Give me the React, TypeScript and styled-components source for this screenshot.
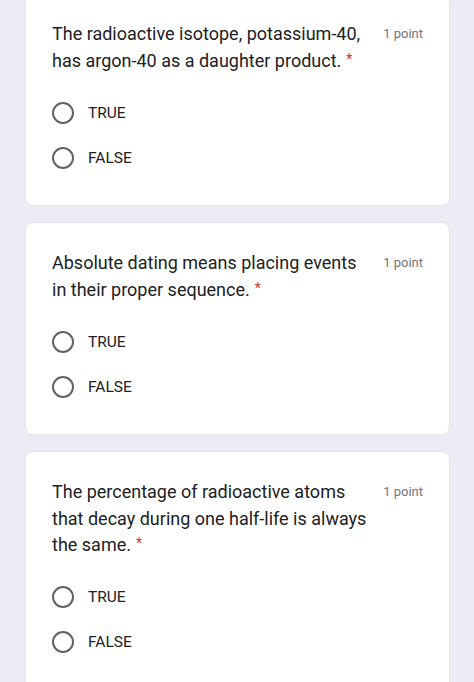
import React from 'react';
import styled, { createGlobalStyle } from 'styled-components';

const GlobalStyle = createGlobalStyle`
    html, body {
        margin: 0;
        padding: 0;
        background-color: #edebf6;
        font-family: Roboto, "Liberation Sans", Arial, sans-serif;
        overflow: hidden;
    }
`;

const Page = styled.div`
    display: flex;
    flex-direction: column;
    gap: 16px;
    margin-top: -7px;
    padding: 0 24px 0 25px;
`;

const Card = styled.div`
    background-color: #ffffff;
    border: 1px solid #e6e4ec;
    border-radius: 8px;
    padding: 27px 26px 25px 26px;
`;

const Header = styled.div`
    display: flex;
    justify-content: space-between;
    align-items: flex-start;
`;

const Question = styled.div`
    width: 325px;
    font-size: 18px;
    line-height: 26.5px;
    color: #202124;
`;

const Required = styled.span`
    color: #d93025;
    font-size: 14px;
    line-height: 0;
    vertical-align: 3px;
    margin-left: 5px;
`;

const Points = styled.div`
    font-size: 13px;
    line-height: 26.5px;
    color: #70757a;
    white-space: nowrap;
`;

const Options = styled.div`
    display: flex;
    flex-direction: column;
    margin-top: 16px;
`;

const Option = styled.label`
    display: flex;
    align-items: center;
    height: 45px;
    cursor: pointer;
`;

const Radio = styled.span`
    box-sizing: border-box;
    width: 22px;
    height: 22px;
    border: 2px solid #5f6368;
    border-radius: 50%;
    flex-shrink: 0;
`;

const OptionLabel = styled.span`
    margin-left: 14px;
    font-size: 15.5px;
    color: #202124;
`;

type Item = { lines: string[] };

const items: Item[] = [
    { lines: ['The radioactive isotope, potassium-40,', 'has argon-40 as a daughter product.'] },
    { lines: ['Absolute dating means placing events', 'in their proper sequence.'] },
    { lines: ['The percentage of radioactive atoms', 'that decay during one half-life is always', 'the same.'] },
];

const QuestionCard: React.FC<Item> = ({ lines }) => (
    <Card>
        <Header>
            <Question>
                {lines.map((line, i) => (
                    <React.Fragment key={i}>
                        {line}
                        {i < lines.length - 1 ? <br /> : <Required>*</Required>}
                    </React.Fragment>
                ))}
            </Question>
            <Points>1 point</Points>
        </Header>
        <Options>
            <Option>
                <Radio />
                <OptionLabel>TRUE</OptionLabel>
            </Option>
            <Option>
                <Radio />
                <OptionLabel>FALSE</OptionLabel>
            </Option>
        </Options>
    </Card>
);

const App: React.FC = () => (
    <>
        <GlobalStyle />
        <Page>
            {items.map((item, i) => (
                <QuestionCard key={i} lines={item.lines} />
            ))}
        </Page>
    </>
);

export default App;
